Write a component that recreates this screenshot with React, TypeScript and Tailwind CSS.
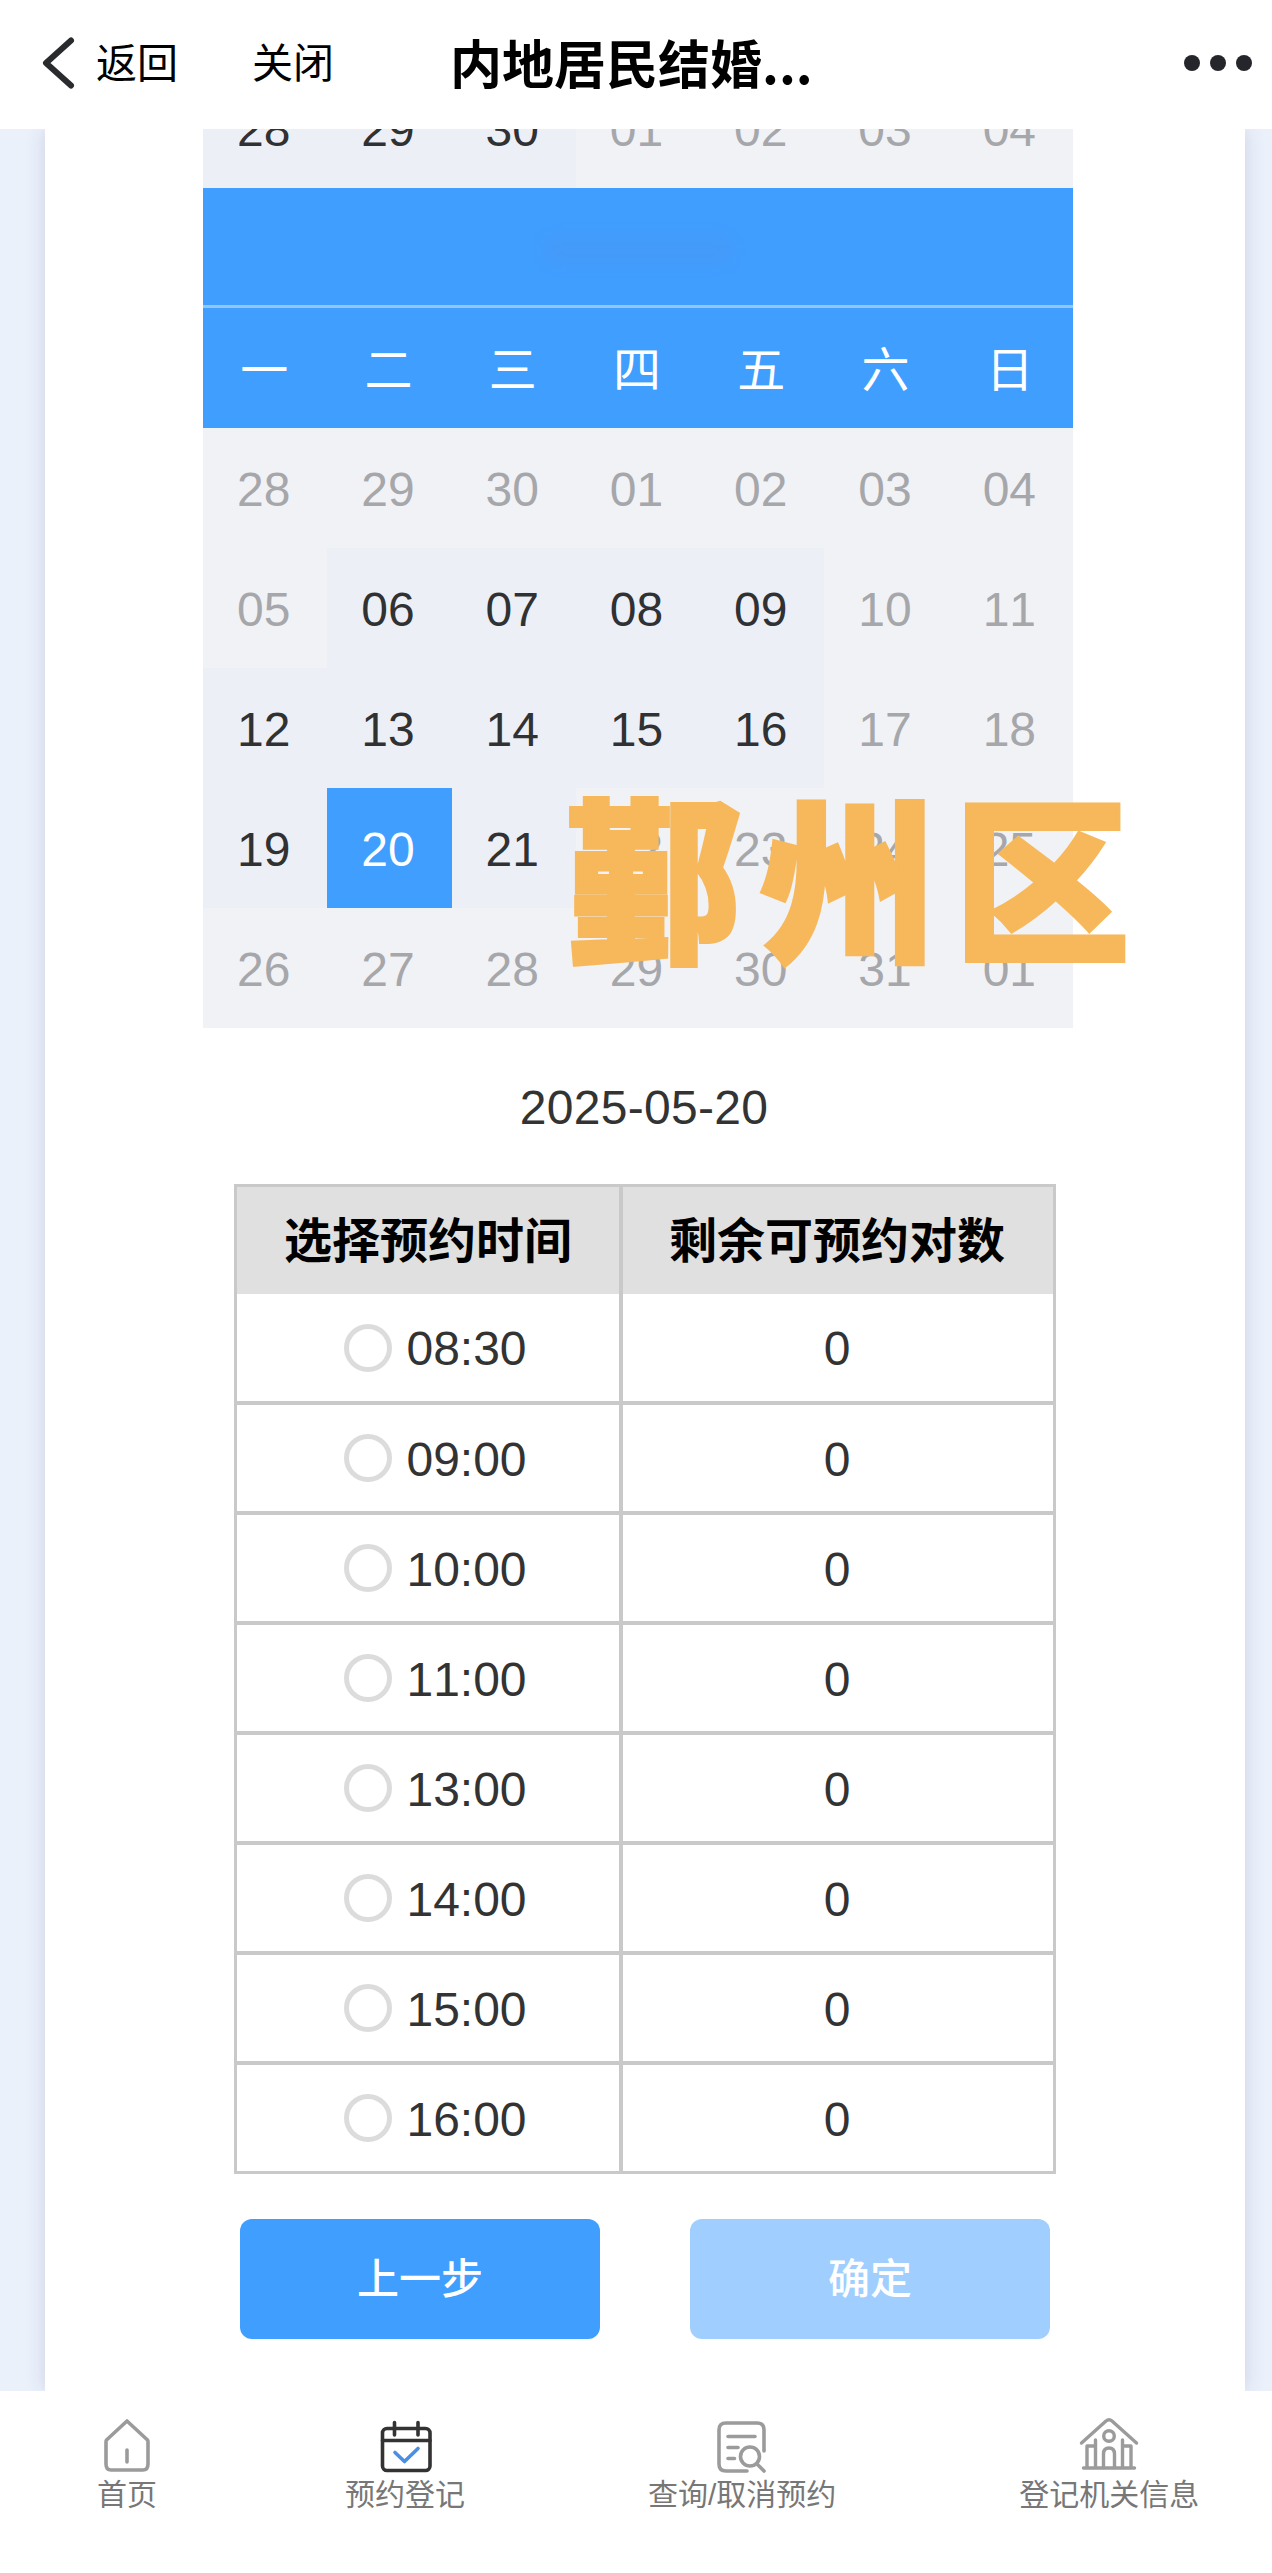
import React from 'react';

const weekdays = ['一', '二', '三', '四', '五', '六', '日'];

type DayState = 'off' | 'open' | 'active';

const lastRow: [string, DayState][] = [
  ['28', 'open'], ['29', 'open'], ['30', 'open'], ['01', 'off'], ['02', 'off'], ['03', 'off'], ['04', 'off'],
];

const days: [string, DayState][] = [
  ['28', 'off'], ['29', 'off'], ['30', 'off'], ['01', 'off'], ['02', 'off'], ['03', 'off'], ['04', 'off'],
  ['05', 'off'], ['06', 'open'], ['07', 'open'], ['08', 'open'], ['09', 'open'], ['10', 'off'], ['11', 'off'],
  ['12', 'open'], ['13', 'open'], ['14', 'open'], ['15', 'open'], ['16', 'open'], ['17', 'off'], ['18', 'off'],
  ['19', 'open'], ['20', 'active'], ['21', 'open'], ['22', 'off'], ['23', 'off'], ['24', 'off'], ['25', 'off'],
  ['26', 'off'], ['27', 'off'], ['28', 'off'], ['29', 'off'], ['30', 'off'], ['31', 'off'], ['01', 'off'],
];

const slots = ['08:30', '09:00', '10:00', '11:00', '13:00', '14:00', '15:00', '16:00'];

const dayStyles: Record<DayState, string> = {
  off: 'bg-[#f1f2f6] text-[#a6a7aa]',
  open: 'bg-[#edeff7] text-[#303133]',
  active: 'bg-[#409eff] text-white',
};

const Day: React.FC<{ label: string; state: DayState }> = ({ label, state }) => (
  <div className={`h-[120px] flex items-center justify-center pt-[3px] pr-[3px] ${dayStyles[state]}`}>{label}</div>
);

const Header: React.FC = () => (
  <header className="relative z-20 h-[129px] shrink-0 bg-white flex items-center pb-[3px] text-black">
    <svg className="ml-[40px] w-[36px] h-[56px]" viewBox="0 0 36 56" fill="none" stroke="#2a2b2e" strokeWidth="6" strokeLinecap="round" strokeLinejoin="round">
      <path d="M31 5.500L6 28l25 22.500" />
    </svg>
    <span className="ml-[20px] pt-[3px] text-[41px] leading-none">返回</span>
    <span className="ml-[74px] pt-[3px] text-[41px] leading-none">关闭</span>
    <h1 className="ml-[116px] pb-[2px] text-[52px] leading-none font-bold font-['Noto_Sans_CJK_SC',sans-serif]">
      内地居民结婚...
    </h1>
    <div className="ml-auto mr-[20px] flex gap-[10px]">
      <i className="w-4 h-4 rounded-full bg-[#25262b]" />
      <i className="w-4 h-4 rounded-full bg-[#25262b]" />
      <i className="w-4 h-4 rounded-full bg-[#25262b]" />
    </div>
  </header>
);

const Calendar: React.FC = () => (
  <div className="relative w-[870px] ml-[158px] -mt-[61px] text-[48px] leading-none">
    <div className="grid grid-cols-7">
      {lastRow.map(([label, state]) => <Day key={label} label={label} state={state} />)}
    </div>
    <div className="h-[120px] bg-[#409eff] border-b-[3px] border-[#92c6fb] flex items-center justify-center">
      <div className="w-[190px] h-[30px] mt-[6px] rounded-full bg-[#4a97f0]/40 blur-[6px]" />
    </div>
    <div className="grid grid-cols-7 bg-[#409eff] text-white">
      {weekdays.map((d) => (
        <div key={d} className="h-[120px] flex items-center justify-center pt-[5px] pr-[2px]">{d}</div>
      ))}
    </div>
    <div className="grid grid-cols-7">
      {days.map(([label, state], i) => <Day key={i} label={label} state={state} />)}
    </div>

    {/* District name laid over the last weeks */}
    <div className="absolute left-[363px] top-[720px] whitespace-nowrap text-[176px] leading-[200px] font-black tracking-[18px] text-[#f6b85a] [-webkit-text-stroke:4px_#f6b85a]">
      鄞州区
    </div>
  </div>
);

const SlotTable: React.FC = () => (
  <div className="w-[822px] mx-auto mt-[50px] border-[3px] border-[#c9c9c9] text-[48px] leading-none text-[#333]">
    <div className="flex h-[107px] bg-[#e0e0e0] text-black font-bold">
      <div className="w-[386px] border-r-4 border-[#c9c9c9] flex items-center justify-center pt-[3px]">选择预约时间</div>
      <div className="flex-1 flex items-center justify-center pt-[3px] pr-[2px]">剩余可预约对数</div>
    </div>
    {slots.map((time, i) => (
      <div key={time} className={`flex border-[#c9c9c9] ${i === 0 ? 'h-[111px]' : 'h-[110px]'} last:h-[106px] border-b-4 last:border-b-0`}>
        <div className="w-[386px] border-r-4 border-[#c9c9c9] flex items-center justify-center gap-[14px] pl-[15px]">
          <span className="w-12 h-12 rounded-full border-[5px] border-[#dcdcdc]" />
          <span className="pt-[3px]">{time}</span>
        </div>
        <div className="flex-1 flex items-center justify-center pt-[3px] pr-[2px]">0</div>
      </div>
    ))}
  </div>
);

const HomeIcon: React.FC = () => (
  <svg className="w-[60px] h-[60px]" viewBox="0 0 60 60" fill="none" stroke="#9b9b9b" strokeWidth="3.600" strokeLinecap="round" strokeLinejoin="round">
    <path d="M30 6L9.500 25Q9 25.500 9 27V49q0 6 5 6h32q5 0 5-6V27q0-1.500-.5-2L30 6Z" />
    <path d="M30 35v12" />
  </svg>
);

const CalendarIcon: React.FC = () => (
  <svg className="w-[60px] h-[60px]" viewBox="0 0 60 60" fill="none" stroke="#333" strokeWidth="3.600" strokeLinecap="round" strokeLinejoin="round">
    <rect x="7.500" y="13.500" width="47.500" height="42" rx="4.500" />
    <path d="M7.500 25.500H55M19.500 7.500v12.500M43 7.500v12.500" />
    <path d="M20 37.500l9.500 9L43 33.500" stroke="#4a8fe2" />
  </svg>
);

const SearchIcon: React.FC = () => (
  <svg className="w-[60px] h-[60px]" viewBox="0 0 60 60" fill="none" stroke="#9b9b9b" strokeWidth="3.600" strokeLinecap="round" strokeLinejoin="round">
    <path d="M52 36V15q0-7-7-7H14q-7 0-7 7v34q0 7 7 7h21" />
    <path d="M16 21.500h27M16 32.500h10M16 43.500h6.500" />
    <circle cx="38" cy="41.500" r="9.500" />
    <path d="M45 49l7 7" />
  </svg>
);

const OfficeIcon: React.FC = () => (
  <svg className="w-[60px] h-[60px]" viewBox="0 0 60 60" fill="none" stroke="#9b9b9b" strokeWidth="3.400" strokeLinecap="round" strokeLinejoin="round">
    <path d="M2.500 28L27 6q3-2.500 6 0L57.500 28" />
    <circle cx="30" cy="21" r="5.300" />
    <path d="M4.500 53h51M8 52.500V31h8.500M16.500 25v27.500M52 52.500V31h-8.500M43.500 25v27.500" />
    <path d="M24.500 52.500V39q0-6 5.500-6t5.500 6v13.500" />
  </svg>
);

const TabItem: React.FC<{ icon: React.ReactNode; label: string; className?: string }> = ({ icon, label, className = '' }) => (
  <div className={`flex flex-col items-center ${className}`}>
    {icon}
    <span className="mt-[2px] text-[30px] leading-[36px] text-[#777] whitespace-nowrap">{label}</span>
  </div>
);

const App: React.FC = () => (
  <div className="w-[1272px] h-[2573px] overflow-hidden flex flex-col bg-white font-['Liberation_Sans','Noto_Sans_CJK_SC',sans-serif] [font-kerning:none]">
    <Header />

    <main className="h-[2262px] shrink-0 overflow-hidden bg-[#ebf1fb] pl-[45px] pr-[27px]">
      <div className="flow-root h-full bg-white shadow-[0_0_18px_rgba(60,60,120,0.18)]">
        <Calendar />
        <p className="mt-[53px] mb-[-1px] pr-[2px] text-center text-[48px] leading-[54px] tracking-[0.3px] text-[#333]">2025-05-20</p>
        <SlotTable />
        <div className="mt-[45px] flex justify-center gap-[90px] text-[42px] font-medium text-white">
          <button className="w-[360px] h-[120px] rounded-xl bg-[#409eff]">上一步</button>
          <button className="w-[360px] h-[120px] rounded-xl bg-[#9fceff]">确定</button>
        </div>
      </div>
    </main>

    <nav className="relative z-20 h-[182px] bg-white flex gap-[183px] pl-[92px] pt-[24px]">
      <TabItem icon={<HomeIcon />} label="首页" className="w-[70px]" />
      <TabItem icon={<CalendarIcon />} label="预约登记" />
      <TabItem icon={<SearchIcon />} label="查询/取消预约" />
      <TabItem icon={<OfficeIcon />} label="登记机关信息" />
    </nav>
  </div>
);

export default App;
